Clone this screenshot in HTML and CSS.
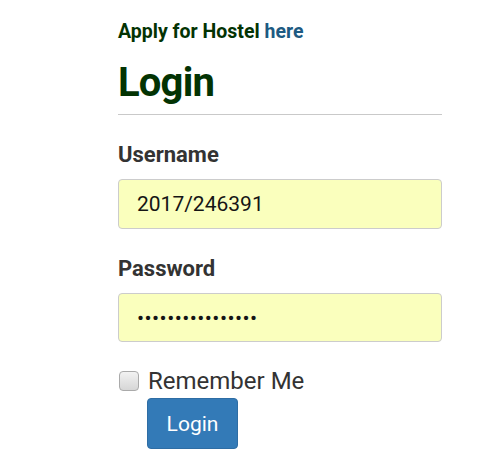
FILE: index.html
```html
<!DOCTYPE html>
<html lang="en">
<head>
  <meta charset="UTF-8" />
  <meta name="viewport" content="width=device-width, initial-scale=1.0" />
  <title>Login</title>
  <link rel="stylesheet" href="styles.css">
</head>
<body>
  <div class="container">
    <p class="apply">Apply for Hostel <a href="#">here</a></p>
    <h1>Login</h1>

    <form class="login-form" onsubmit="return false">
      <label for="username">Username</label>
      <input type="text" id="username" value="2017/246391">

      <label for="password">Password</label>
      <input type="password" id="password" value="1234567890123456">

      <div class="remember">
        <input type="checkbox" id="remember">
        <label for="remember">Remember Me</label>
      </div>
      <button type="submit">Login</button>
    </form>
  </div>
</body>
</html>
```
FILE: styles.css
```css
:root {
  --green: #033303;
  --link: #1d5a82;
  --text: #333;
  --border: #ccc;
  --autofill: #faffbd;
  --primary: #337ab7;
}

* {
  box-sizing: border-box;
}

body {
  margin: 0;
  font-family: Roboto, 'Noto Sans', sans-serif;
  color: var(--text);
  background: #fff;
}

.container {
  width: 324px;
  margin-left: 118px;
  padding-top: 21px;
}

.apply {
  margin: 0;
  font-size: 19.5px;
  font-weight: 700;
  line-height: 22px;
  color: var(--green);
}

.apply a {
  color: var(--link);
  text-decoration: none;
}

h1 {
  margin: 16px 0 0;
  padding-bottom: 7px;
  font-size: 40px;
  line-height: 48px;
  font-weight: 700;
  letter-spacing: -0.8px;
  color: var(--green);
  border-bottom: 1px solid #c9c9c9;
}

.login-form {
  display: flex;
  flex-direction: column;
  align-items: flex-start;
  padding-top: 27px;
}

.login-form > label {
  font-size: 22px;
  font-weight: 700;
  line-height: 26px;
  margin-bottom: 11px;
}

.login-form input[type="text"],
.login-form input[type="password"] {
  width: 100%;
  height: 50px;
  margin-bottom: 27px;
  padding: 0 18px;
  font-family: inherit;
  font-size: 21px;
  color: #151515;
  background: var(--autofill);
  border: 1px solid var(--border);
  border-radius: 4px;
  outline: none;
}

.login-form input[type="password"] {
  height: 49px;
  letter-spacing: 0.45px;
}

.remember {
  display: flex;
  align-items: center;
  gap: 9px;
  height: 24px;
}

.remember input {
  appearance: none;
  width: 20px;
  height: 20px;
  margin: 0 0 0 1px;
  border: 1px solid #aaa;
  border-radius: 4px;
  background: linear-gradient(#f2f2f2, #d6d6d6);
}

.remember label {
  font-size: 24px;
  line-height: 24px;
  color: var(--text);
}

button {
  margin: 5px 0 0 29px;
  width: 91px;
  height: 51px;
  font-family: inherit;
  font-size: 21px;
  color: #fff;
  background: var(--primary);
  border: 1px solid #2e6da4;
  border-radius: 4px;
  cursor: pointer;
}
```
